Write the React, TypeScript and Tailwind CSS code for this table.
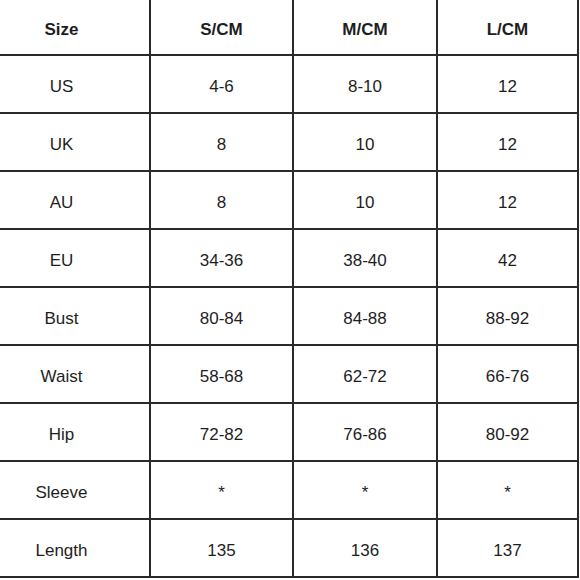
import React from "react";

const header = ["Size", "S/CM", "M/CM", "L/CM"];
const rows: string[][] = [
  ["US", "4-6", "8-10", "12"],
  ["UK", "8", "10", "12"],
  ["AU", "8", "10", "12"],
  ["EU", "34-36", "38-40", "42"],
  ["Bust", "80-84", "84-88", "88-92"],
  ["Waist", "58-68", "62-72", "66-76"],
  ["Hip", "72-82", "76-86", "80-92"],
  ["Sleeve", "*", "*", "*"],
  ["Length", "135", "136", "137"],
];

export default function App() {
  const all = [header, ...rows];
  return (
    <div
      className="w-[580px] h-[580px] bg-white text-[#1e1e1e] overflow-hidden"
      style={{ fontFamily: '"Liberation Sans", Arial, sans-serif' }}
    >
      <div className="grid grid-cols-[151px_143px_144px_141px] w-[579px]">
        {all.map((row, ri) =>
          row.map((cell, ci) => (
            <div
              key={`${ri}-${ci}`}
              className={`flex items-center justify-center border-r-2 border-b-2 border-[#2a2a2a] text-[17px] pt-[5px] ${
                ri === 0 ? "h-[56px] font-bold" : "h-[58px]"
              } ${ci === 0 ? "pr-[26px]" : ""}`}
            >
              {cell}
            </div>
          ))
        )}
      </div>
    </div>
  );
}
